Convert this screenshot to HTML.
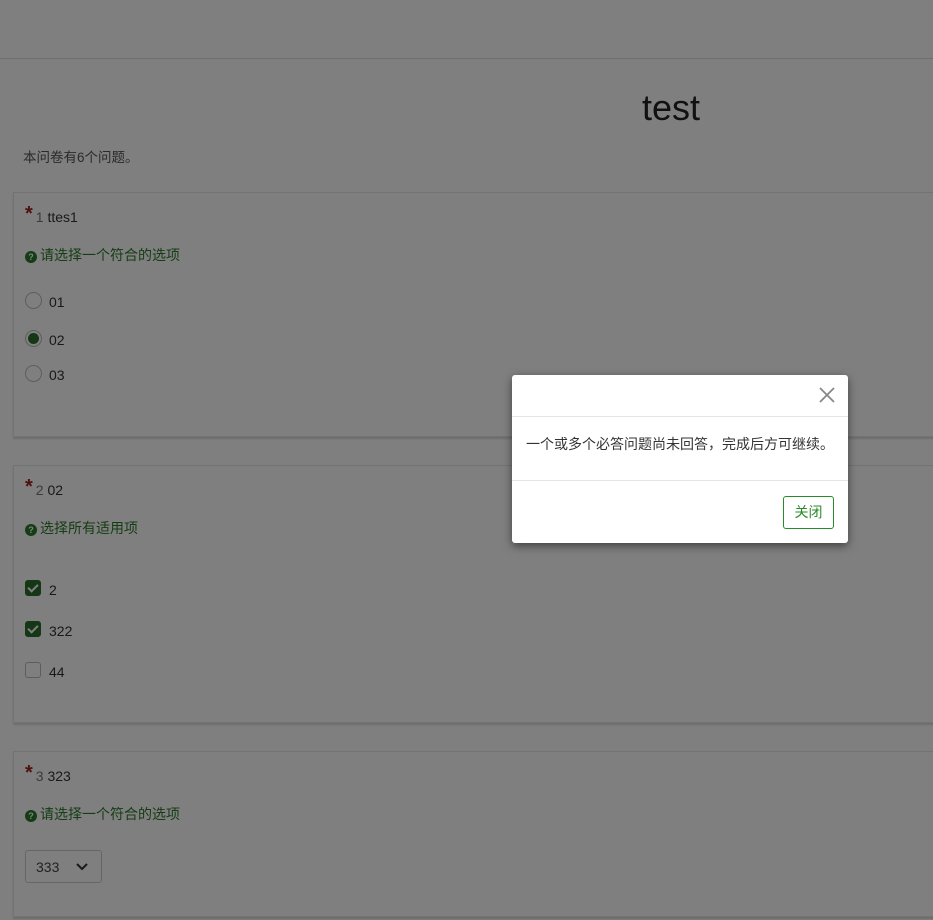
<!DOCTYPE html>
<html><head><meta charset="utf-8"><style>
*{box-sizing:border-box;margin:0;padding:0}
html,body{width:933px;height:920px;overflow:hidden}
body{background:#fff;font-family:"Liberation Sans","Noto Sans CJK SC",sans-serif;color:#333;position:relative}
.hdr{position:absolute;left:0;top:0;width:933px;height:59px;border-bottom:1px solid #ddd;background:#fff}
.title{position:absolute;left:642px;top:87px;font-size:36px;color:#222}
.intro{position:absolute;left:23px;top:146px;font-size:13.5px;color:#555}
.panel{position:absolute;left:13px;width:940px;border:1px solid #e6e6e6;border-right:none;box-shadow:0 2px 2px rgba(0,0,0,.15);background:#fff}
.q{position:absolute;left:11px;font-size:14px;color:#333}
.q b{color:#a02020;font-size:20px;position:relative;top:-2px;margin-right:3px;line-height:10px}
.q span.n{color:#777}
.help{position:absolute;left:11px;font-size:14px;color:#2a7a2a}
.help i{display:inline-block;width:12px;height:12px;border-radius:50%;background:#2a7a2a;color:#fff;font-size:9px;font-weight:bold;text-align:center;line-height:12px;font-style:normal;margin-right:3px;vertical-align:0px}
.opt{position:absolute;left:11px;font-size:14px;height:18px;line-height:18px}
.opt .r{position:absolute;left:0;top:0;width:17px;height:17px;border:1px solid #bbb;border-radius:50%}
.opt .r.on::after{content:"";position:absolute;left:2px;top:2px;width:11px;height:11px;border-radius:50%;background:#2a6e2a}
.opt .c{position:absolute;left:0;top:0;width:16px;height:16px;border:1px solid #bbb;border-radius:3px}
.opt .c.on{background:#2a6e2a;border-color:#2a6e2a}
.opt .c.on::after{content:"";position:absolute;left:4px;top:1px;width:4px;height:8px;border:solid #fff;border-width:0 2px 2px 0;transform:rotate(45deg)}
.opt .t{position:absolute;left:24px;top:1px;white-space:nowrap}
.sel{position:absolute;left:11px;top:98px;width:77px;height:33px;border:1px solid #ccc;border-radius:3px;font-size:14px;padding:8px 0 0 10px;color:#444}
.ov{position:absolute;left:0;top:0;width:933px;height:920px;background:rgba(0,0,0,.5)}
.modal{position:absolute;left:512px;top:375px;width:336px;height:168px;background:#fff;border-radius:3px;box-shadow:0 3px 9px rgba(0,0,0,.5)}
.mh{height:42px;border-bottom:1px solid #e5e5e5;position:relative}
.x{position:absolute;right:13px;top:12px;width:16px;height:16px}
.mb{height:64px;border-bottom:1px solid #e5e5e5;padding:17px 0 0 14px;font-size:14px;color:#333;white-space:nowrap}
.btn{position:absolute;right:14px;top:121px;width:51px;height:33px;border:1px solid #2a8a2a;border-radius:3px;color:#2a8a2a;font-size:14px;text-align:center;line-height:31px}
</style></head><body>
<div class="hdr"></div>
<div class="title">test</div>
<div class="intro">本问卷有6个问题。</div>

<div class="panel" style="top:192px;height:245px">
<div class="q" style="top:16px"><b>*</b><span class="n">1</span> ttes1</div>
<div class="help" style="top:52px"><i>?</i>请选择一个符合的选项</div>
<div class="opt" style="top:99px"><span class="r"></span><span class="t">01</span></div>
<div class="opt" style="top:137px"><span class="r on"></span><span class="t">02</span></div>
<div class="opt" style="top:172px"><span class="r"></span><span class="t">03</span></div>
</div>

<div class="panel" style="top:465px;height:258px">
<div class="q" style="top:16px"><b>*</b><span class="n">2</span> 02</div>
<div class="help" style="top:52px"><i>?</i>选择所有适用项</div>
<div class="opt" style="top:114px"><span class="c on"></span><span class="t">2</span></div>
<div class="opt" style="top:155px"><span class="c on"></span><span class="t">322</span></div>
<div class="opt" style="top:196px"><span class="c"></span><span class="t">44</span></div>
</div>

<div class="panel" style="top:751px;height:166px">
<div class="q" style="top:16px"><b>*</b><span class="n">3</span> 323</div>
<div class="help" style="top:52px"><i>?</i>请选择一个符合的选项</div>
<div class="sel">333<svg style="position:absolute;left:50px;top:12px" width="12" height="8" viewBox="0 0 12 8"><path d="M1 1l5 5 5-5" stroke="#333" stroke-width="2" fill="none"/></svg></div>
</div>

<div class="ov"></div>
<div class="modal">
<div class="mh"><svg class="x" viewBox="0 0 16 16"><path d="M1 1L15 15M15 1L1 15" stroke="#888" stroke-width="1.8"/></svg></div>
<div class="mb">一个或多个必答问题尚未回答，完成后方可继续。</div>
<div class="btn">关闭</div>
</div>
</body></html>
